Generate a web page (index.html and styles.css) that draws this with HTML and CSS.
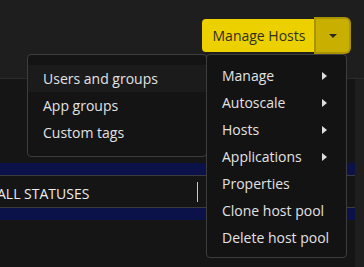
FILE: index.html
```html
<!DOCTYPE html>
<html lang="en">
<head>
    <meta charset="UTF-8">
    <meta name="viewport" content="width=device-width, initial-scale=1.0">
    <title>Host pool actions</title>
    <link rel="stylesheet" href="styles.css">
</head>
<body>

    <div class="topbar">
        <div class="split-btn">
            <button class="btn-main">Manage Hosts</button>
            <button class="btn-caret"><span class="caret-down"></span></button>
        </div>
    </div>

    <div class="content">
        <div class="band"></div>
        <div class="filter-row">
            <span class="filter-label">ALL STATUSES</span>
            <span class="filter-bar"></span>
        </div>
        <div class="band"></div>
    </div>

    <!-- Secondary menu (behind) -->
    <ul class="menu menu-groups">
        <li class="menu-item hover">Users and groups</li>
        <li class="menu-item">App groups</li>
        <li class="menu-item">Custom tags</li>
    </ul>

    <!-- Manage Hosts dropdown -->
    <ul class="menu menu-hosts">
        <li class="menu-item">Manage <span class="caret-right"></span></li>
        <li class="menu-item">Autoscale <span class="caret-right"></span></li>
        <li class="menu-item">Hosts <span class="caret-right"></span></li>
        <li class="menu-item">Applications <span class="caret-right"></span></li>
        <li class="menu-item">Properties</li>
        <li class="menu-item">Clone host pool</li>
        <li class="menu-item">Delete host pool</li>
    </ul>

</body>
</html>
```

FILE: styles.css
```css
/* General Styling */
* {
    margin: 0;
    padding: 0;
    box-sizing: border-box;
    font-family: 'Open Sans', 'Noto Sans', sans-serif;
}

body {
    width: 364px;
    height: 267px;
    overflow: hidden;
    background-color: #1e1e1e;
    position: relative;
}

/* Top bar with the split button */
.topbar {
    height: 79px;
    display: flex;
    justify-content: flex-end;
    align-items: flex-start;
    padding: 19px 15px 0 0;
    border-bottom: 1px solid #2c2c2c;
}

.split-btn {
    display: flex;
    height: 33px;
}

.split-btn button {
    border: none;
    outline: none;
    cursor: pointer;
}

.btn-main {
    width: 114px;
    background-color: #edd000;
    color: #2f2f22;
    font-size: 14px;
    border-radius: 4px 0 0 4px;
}

.btn-caret {
    width: 33px;
    background-color: #c9b000;
    border-radius: 0 4px 4px 0;
    box-shadow: 0 0 0 2px #a99400;
    display: flex;
    justify-content: center;
    align-items: center;
}

.caret-down {
    width: 0;
    height: 0;
    border-left: 4px solid transparent;
    border-right: 4px solid transparent;
    border-top: 4px solid #2a2a22;
}

/* Content area behind the menus */
.content {
    width: 355px;
    height: 188px;
    background-color: #151515;
    padding-top: 84px;
}

.band {
    height: 12px;
    background-color: #0b1149;
}

.filter-row {
    height: 33px;
    display: flex;
    align-items: center;
    border-top: 1px solid #3b3b3b;
    border-bottom: 1px solid #3b3b3b;
}

.filter-label {
    margin-left: -3px;
    padding-top: 4px;
    color: #ececec;
    font-size: 14px;
    white-space: nowrap;
}

.filter-bar {
    margin-left: auto;
    margin-right: 157px;
    width: 1px;
    height: 20px;
    background-color: #c8c8c8;
}

/* Dropdown menus */
.menu {
    position: absolute;
    list-style: none;
    background-color: #131313;
    border: 1px solid #3d3d3d;
    border-radius: 4px;
}

.menu-item {
    height: 27px;
    line-height: 27px;
    padding-left: 15px;
    color: #e2e2e2;
    font-size: 14px;
    white-space: nowrap;
    display: flex;
    align-items: center;
    justify-content: space-between;
}

.menu-groups {
    left: 27px;
    top: 54px;
    width: 180px;
    height: 103px;
    padding-top: 10px;
    background-color: #141414;
}

.menu-groups .hover {
    background-color: #1b1b1b;
}

.menu-hosts {
    left: 206px;
    top: 54px;
    width: 141px;
    height: 204px;
    padding-top: 7px;
}

.menu-hosts .menu-item {
    padding-right: 19px;
}

.caret-right {
    width: 0;
    height: 0;
    border-top: 4px solid transparent;
    border-bottom: 4px solid transparent;
    border-left: 5px solid #dedede;
}
```
